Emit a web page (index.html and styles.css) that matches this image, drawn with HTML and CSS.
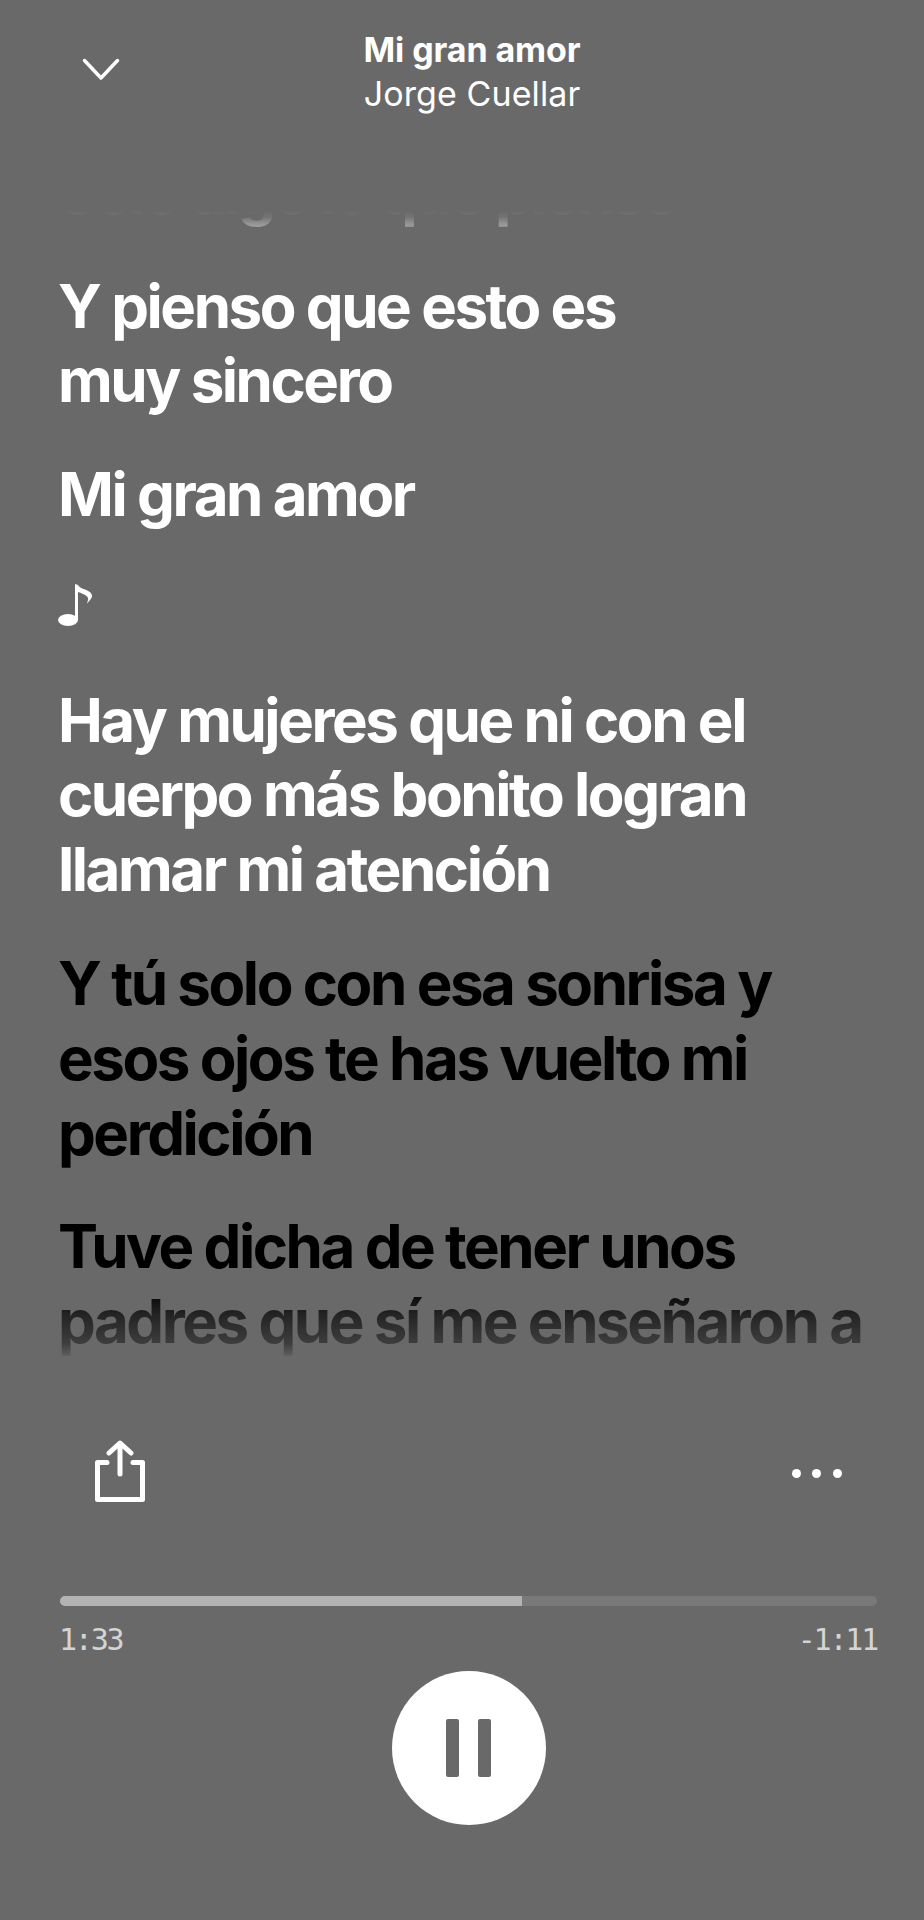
FILE: index.html
```html
<!DOCTYPE html>
<html lang="es">
<head>
<meta charset="utf-8">
<title>Mi gran amor</title>
<link rel="stylesheet" href="styles.css">
</head>
<body>
<main class="screen">
  <header class="top">
    <svg class="chevron" viewBox="0 0 38 23" aria-hidden="true"><path d="M2.500 2.500 L19 20 L35.500 2.500"/></svg>
    <div class="track">
      <div class="track-title">Mi gran amor</div>
      <div class="track-artist">Jorge Cuellar</div>
    </div>
  </header>
  <section class="lyrics">
    <p class="verse">Solo digo lo que pienso</p>
    <p class="verse">Y pienso que esto es<br>muy sincero</p>
    <p class="verse">Mi gran amor</p>
    <p class="verse note"><svg viewBox="0 0 34 42" aria-hidden="true"><ellipse cx="10" cy="36" rx="10" ry="6"/><path d="M17 0 L20 1 C21 3 24 4.500 27 5.500 C32 7.500 34 9.500 34 12 C34 14.500 31 17 29 19.500 C30 16 31 14.500 29 12.500 C27 10.500 23 9 20 8 L20 36 L17 36 Z"/></svg></p>
    <p class="verse">Hay mujeres que ni con el<br>cuerpo más bonito logran<br>llamar mi atención</p>
    <p class="verse upcoming">Y tú solo con esa sonrisa y<br>esos ojos te has vuelto mi<br>perdición</p>
    <p class="verse upcoming">Tuve dicha de tener unos<br>padres que sí me enseñaron a</p>
  </section>
  <div class="actions">
    <svg class="share" viewBox="0 0 50 62" aria-hidden="true"><path d="M12 22.500 H2.500 V59.500 H47.500 V22.500 H38"/><path d="M25 34 V4"/><path d="M14 13 L25 3 L36 13"/></svg>
    <div class="more"><span></span><span></span><span></span></div>
  </div>
  <div class="progress"><div class="progress-fill"></div></div>
  <div class="times"><span>1:33</span><span>-1:11</span></div>
  <div class="controls">
    <div class="pause"><span></span><span></span></div>
  </div>
</main>
</body>
</html>
```
FILE: styles.css
```css
* { box-sizing: border-box; }
html, body { margin: 0; padding: 0; }
body { background: #696969; font-family: Inter, "Liberation Sans", sans-serif; }
.screen { width: 924px; height: 1920px; overflow: hidden; display: flex; flex-direction: column; background: #696969; }
.top { height: 120px; padding: 28px 0 0 82px; display: flex; align-items: flex-start; flex: none; }
.chevron { width: 38px; height: 23px; margin-top: 30px; flex: none; fill: none; stroke: #fff; stroke-width: 3.5; stroke-linecap: round; stroke-linejoin: round; }
.track { margin-left: 192px; width: 320px; text-align: center; color: #fff; font-size: 34px; line-height: 44px; }
.track-title { font-weight: 700; letter-spacing: -0.1px; }
.track-artist { font-weight: 400; letter-spacing: 0.1px; }
.lyrics { height: 1250px; flex: none; padding: 35px 0 0 58px; overflow: hidden; color: #fff; font-size: 60px; font-weight: 700; line-height: 74.840px; letter-spacing: -2.45px;
  -webkit-mask-image: linear-gradient(to bottom, transparent 90px, rgba(0,0,0,.07) 97px, rgba(0,0,0,.3) 104px, #000 155px, #000 1165px, rgba(0,0,0,.87) 1178px, rgba(0,0,0,.65) 1195px, rgba(0,0,0,.42) 1223px, rgba(0,0,0,.12) 1235px, transparent 1242px);
  mask-image: linear-gradient(to bottom, transparent 90px, rgba(0,0,0,.07) 97px, rgba(0,0,0,.3) 104px, #000 155px, #000 1165px, rgba(0,0,0,.87) 1178px, rgba(0,0,0,.65) 1195px, rgba(0,0,0,.42) 1223px, rgba(0,0,0,.12) 1235px, transparent 1242px); }
.verse { margin: 0 0 38.800px; white-space: nowrap; }
.note { height: 73px; padding-top: 13px; }
.note svg { display: block; width: 34px; height: 42px; fill: #fff; }
.upcoming { color: #000; }
.actions { height: 226px; flex: none; display: flex; justify-content: space-between; align-items: center; padding: 0 82px 24px 95px; }
.share { width: 50px; height: 62px; fill: none; stroke: #fff; stroke-width: 5; stroke-linecap: round; stroke-linejoin: round; }
.more { display: flex; gap: 11.700px; margin-top: 4px; }
.more span { width: 9px; height: 9px; border-radius: 50%; background: #fff; }
.progress { height: 10px; margin: 0 47px 0 60px; border-radius: 5px; background: #797979; overflow: hidden; flex: none; }
.progress-fill { width: 462px; height: 100%; background: #b3b3b3; }
.times { display: flex; justify-content: space-between; margin: 18px 47px 0 59px; color: #d4d4d4; font-family: "DejaVu Sans Mono", monospace; font-size: 30px; line-height: 32px; letter-spacing: -2.200px; }
.controls { display: flex; justify-content: center; padding: 0 0 0 13px; margin-top: 15px; }
.pause { width: 154px; height: 154px; border-radius: 50%; background: #fff; display: flex; justify-content: center; align-items: center; gap: 19px; }
.pause span { width: 13px; height: 58px; border-radius: 2px; background: #696969; }
```
